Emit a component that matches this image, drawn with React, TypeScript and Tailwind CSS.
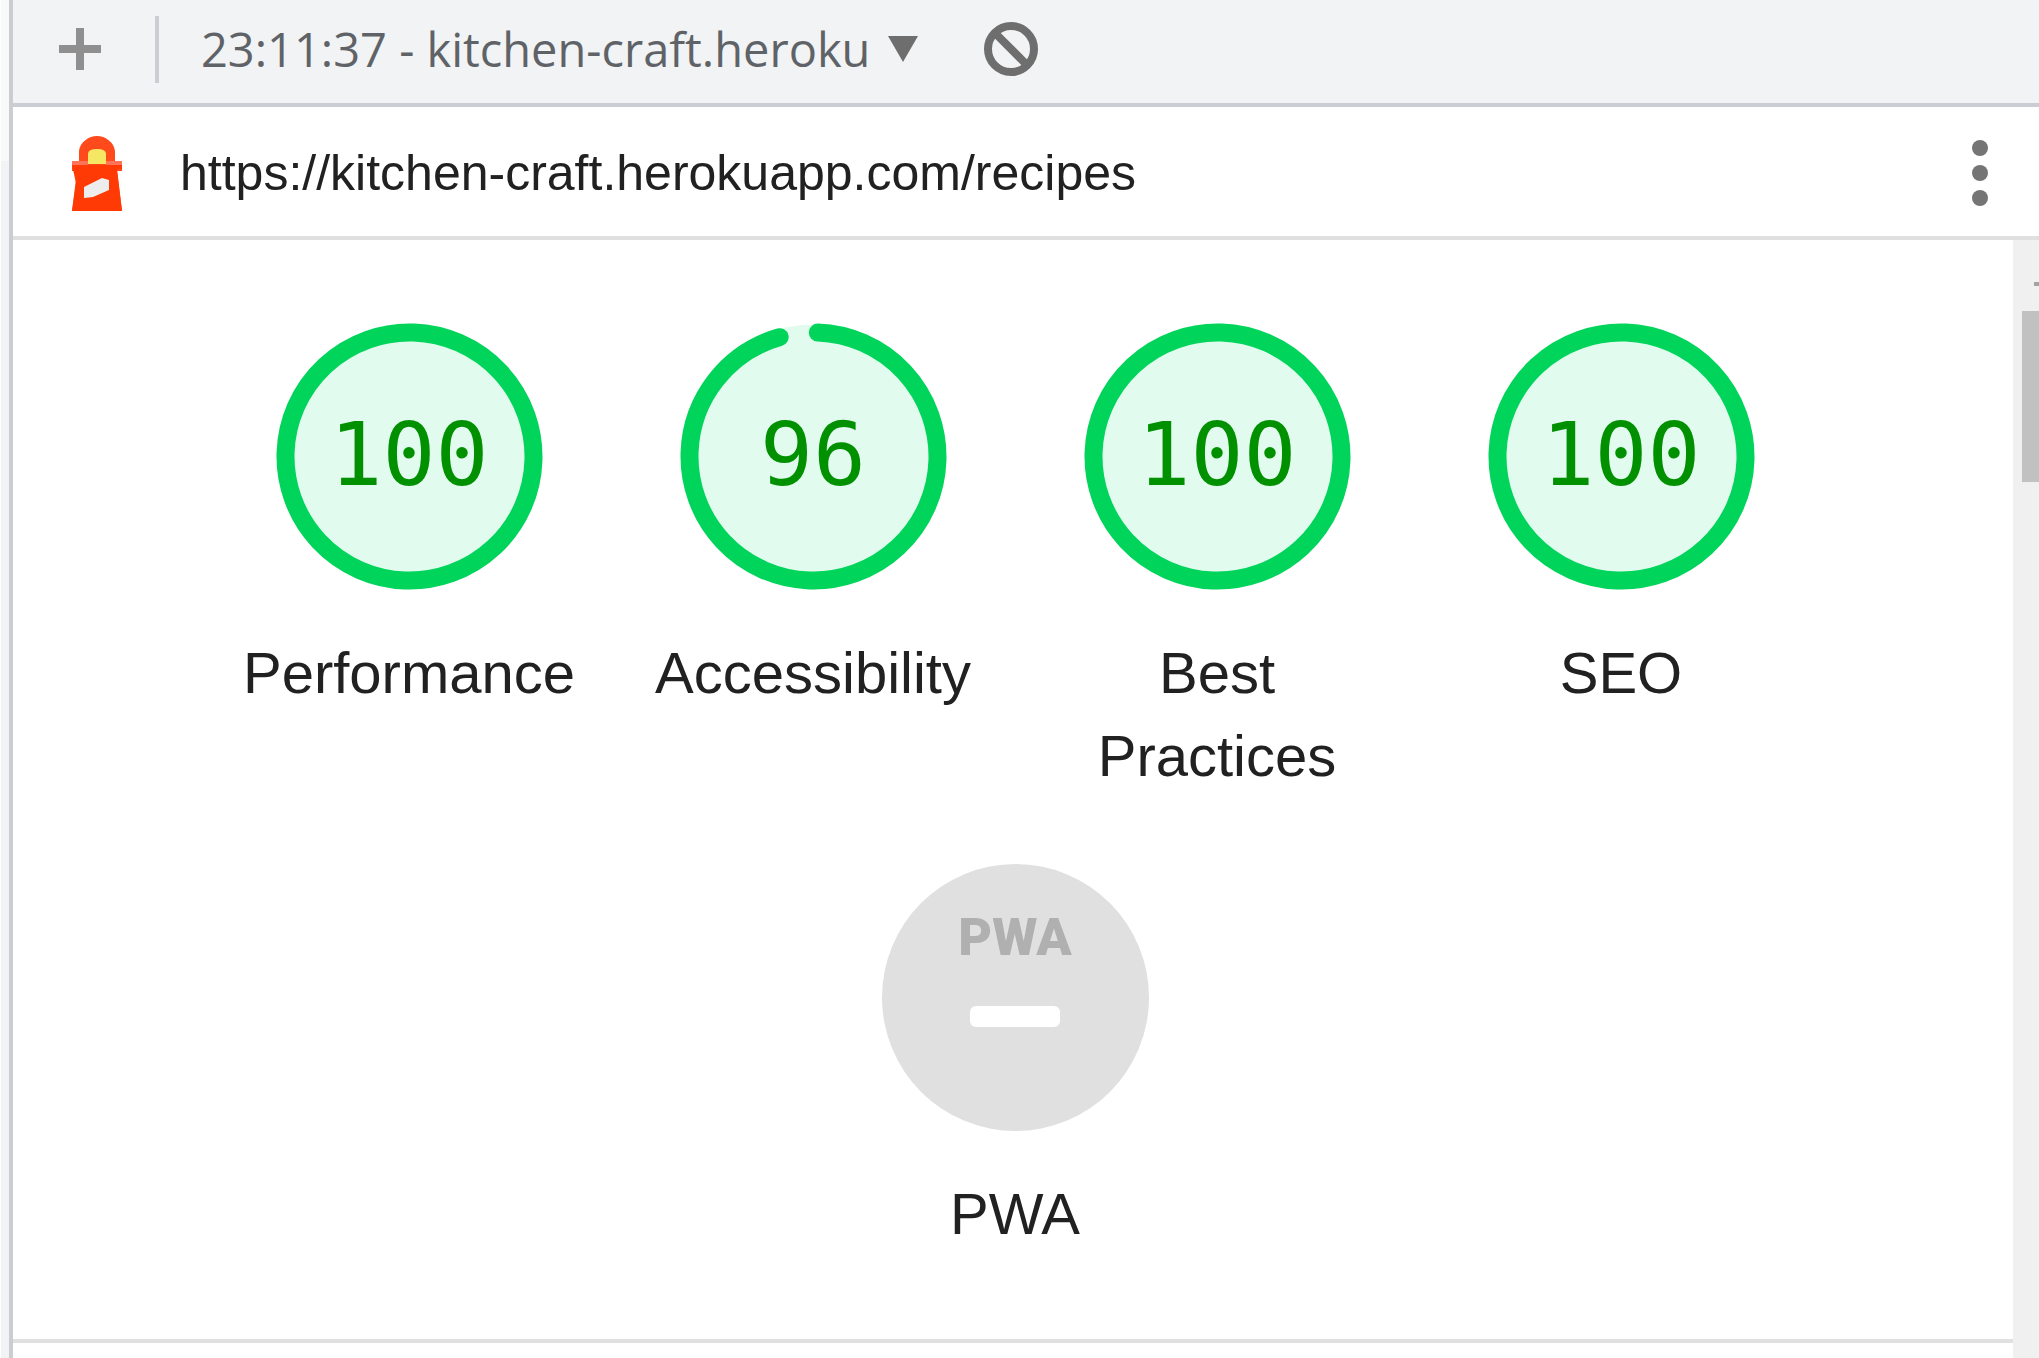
type GaugeProps = { label: string; score: number };

const RADIUS = 124;
const CIRCUMFERENCE = 2 * Math.PI * RADIUS;

function Gauge({ label, score }: GaugeProps) {
  const full = score === 100;
  const arc = full ? CIRCUMFERENCE : CIRCUMFERENCE * (score / 100 - 0.01);
  return (
    <a href={"#" + label} className="flex w-[404px] flex-col items-center gap-[41px] px-8 text-center">
      <span className="relative flex size-[267px] items-center justify-center">
        <svg viewBox="0 0 267 267" className="absolute inset-0 size-full" aria-hidden="true">
          <circle cx="133.5" cy="133.5" r="132" fill="#e1fbee" />
          <circle
            cx="133.5"
            cy="133.5"
            r={RADIUS}
            fill="none"
            stroke="#00d45b"
            strokeWidth="18"
            strokeLinecap="round"
            strokeDasharray={`${arc} ${CIRCUMFERENCE}`}
            transform="rotate(-88 133.5 133.5)"
          />
        </svg>
        <span className="relative pb-1 font-['DejaVu_Sans_Mono',monospace] text-[88px] leading-none text-[#009000]">{score}</span>
      </span>
      <span className="text-[58px] leading-[83px]">{label}</span>
    </a>
  );
}

function PwaGauge() {
  return (
    <a href="#PWA" className="flex w-[404px] flex-col items-center gap-[41px] px-8 text-center">
      <span className="flex size-[267px] flex-col items-center rounded-full bg-[#e0e0e0] pt-[44px]">
        <span className="font-['Roboto','Liberation_Sans',sans-serif] text-[52px] leading-[60px] font-black text-[#b0b0b0]">PWA</span>
        <span className="mt-[38px] h-[21px] w-[90px] rounded-md bg-white" />
      </span>
      <span className="text-[58px] leading-[83px]">PWA</span>
    </a>
  );
}

function Lighthouse() {
  return (
    <svg viewBox="0 0 50 75" className="h-[75px] w-[50px]" aria-hidden="true">
      <path d="M7 25V15C8 6 17 0 25 0s17 6 18 15v10h7v10h-5l5 40H0l5-40H0V25z" fill="#ff4a1c" />
      <path d="M0 29h50v4h-5l5 42H0l4-28z" fill="#ff3a05" />
      <path d="M0 25h16v4H0zM34 25h16v4H34z" fill="#ff7458" />
      <path d="M16 28V18q0-5 9-5t9 5v10z" fill="#f5e663" />
      <path d="M12 62V51l18-9 7 2v10l-16 7z" fill="#ededed" />
    </svg>
  );
}

export default function App() {
  return (
    <div className="flex min-h-screen bg-white font-['Liberation_Sans',Arial,sans-serif] text-[#212121]">
      <div className="flex w-[13px] shrink-0 flex-col border-r-4 border-[#cacdd1] pl-px">
        <div className="h-[161px] bg-[#f8f9f9]" />
        <div className="grow bg-[#f1f3f4]" />
      </div>
      <div className="flex min-w-0 grow flex-col">
        <header className="flex h-[107px] shrink-0 items-center border-b-4 border-[#cacdd3] bg-[#f1f3f4] pb-[5px] pl-[46px]">
          <button type="button" aria-label="New report" className="shrink-0">
            <svg viewBox="0 0 42 42" className="size-[42px]" aria-hidden="true">
              <path d="M17 0h8v17h17v8H25v17h-8V25H0v-8h17z" fill="#8f8f8f" />
            </svg>
          </button>
          <div className="ml-[54px] h-[67px] w-1 bg-[#cacdd1]" />
          <div className="relative ml-[42px] flex items-center">
            <select aria-label="Report" className="w-[717px] appearance-none overflow-hidden bg-transparent pr-[44px] font-['Open_Sans','Noto_Sans',sans-serif] text-[47px] leading-[72px] text-[#5f6368]">
              <option>23:11:37 - kitchen-craft.heroku</option>
            </select>
            <svg viewBox="0 0 30 26" className="pointer-events-none absolute right-0 h-[26px] w-[30px]" aria-hidden="true">
              <path d="M0 0h30L15 26z" fill="#6e6e6e" />
            </svg>
          </div>
          <button type="button" aria-label="Clear all" className="ml-[66px] shrink-0">
            <svg viewBox="0 0 54 54" className="size-[54px]" fill="none" stroke="#6e6e6e" strokeWidth="8" aria-hidden="true">
              <circle cx="27" cy="27" r="23" />
              <path d="m11 11 32 32" />
            </svg>
          </button>
        </header>
        <div className="flex h-[133px] shrink-0 items-center border-b-4 border-[#e0e0e0] pt-[3px] pr-[51px] pl-[59px]">
          <Lighthouse />
          <a href="https://kitchen-craft.herokuapp.com/recipes" className="ml-[58px] text-[50px] leading-[60px]">
            https://kitchen-craft.herokuapp.com/recipes
          </a>
          <button type="button" aria-label="Tools menu" className="ml-auto flex flex-col gap-[9px]">
            <span className="size-4 rounded-full bg-[#757575]" />
            <span className="size-4 rounded-full bg-[#757575]" />
            <span className="size-4 rounded-full bg-[#757575]" />
          </button>
        </div>
        <div className="flex grow">
          <main className="min-w-0 grow">
            <div className="flex flex-wrap justify-center gap-y-[67px] border-b-4 border-[#e0e0e0] pt-[83px] pb-[84px] pl-1">
              <Gauge label="Performance" score={100} />
              <Gauge label="Accessibility" score={96} />
              <Gauge label="Best Practices" score={100} />
              <Gauge label="SEO" score={100} />
              <PwaGauge />
            </div>
          </main>
          <div className="flex w-[26px] shrink-0 flex-col items-end bg-[#f0f0f0] pt-[42px]" aria-hidden="true">
            <div className="h-1 w-[5px] bg-[#a3a3a3]" />
            <div className="mt-[25px] h-[171px] w-[17px] bg-[#c1c1c1]" />
          </div>
        </div>
      </div>
    </div>
  );
}
